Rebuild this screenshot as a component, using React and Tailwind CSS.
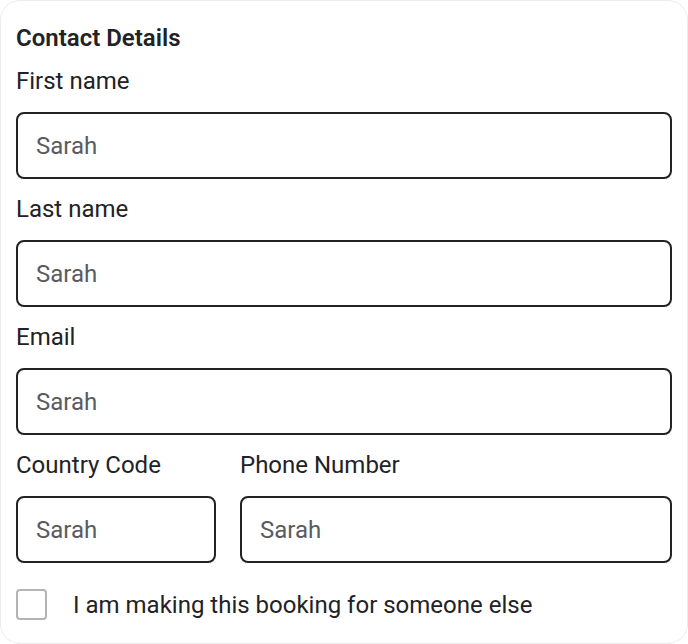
import React, { useState } from 'react';

const Field = ({ label, className = '' }) => (
  <div className={`flex flex-col gap-4 ${className}`}>
    <label className="text-[24px] leading-[30px] text-[#222225]">{label}</label>
    <input
      placeholder="Sarah"
      className="h-[67px] w-full rounded-lg border-2 border-[#222225] px-[18px] text-[24px] text-[#222225] outline-none placeholder:text-[#5b5b5f]"
    />
  </div>
);

export default function App() {
  const [checked, setChecked] = useState(false);

  return (
    <div className="h-[644px] w-[688px] bg-white" style={{ fontFamily: 'Roboto, sans-serif' }}>
      <div className="flex h-full flex-col gap-[15px] rounded-[20px] border border-[#ececec] px-[15px] pt-6">
        <h2 className="text-[24px] font-semibold leading-[26px] text-[#222225]">Contact Details</h2>
        <Field label="First name" />
        <Field label="Last name" />
        <Field label="Email" />
        <div className="flex gap-6">
          <Field label="Country Code" className="w-[200px] shrink-0" />
          <Field label="Phone Number" className="flex-1" />
        </div>
        <label className="mt-[11px] flex items-center gap-[26px]">
          <input
            type="checkbox"
            checked={checked}
            onChange={(e) => setChecked(e.target.checked)}
            className="h-[31px] w-[31px] appearance-none rounded border-2 border-[#b4b4b4] bg-white"
          />
          <span className="text-[24px] leading-[30px] text-[#222225]">I am making this booking for someone else</span>
        </label>
      </div>
    </div>
  );
}
